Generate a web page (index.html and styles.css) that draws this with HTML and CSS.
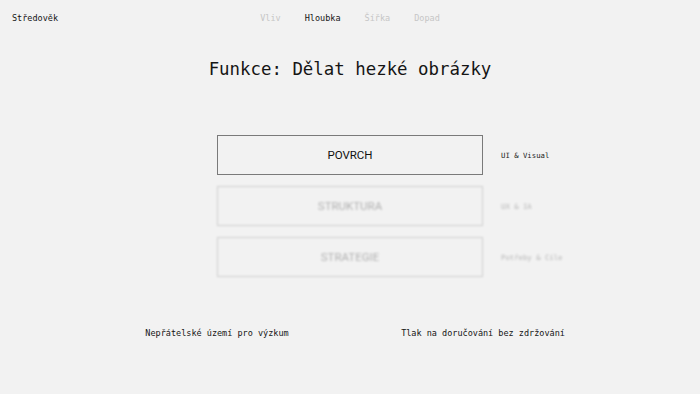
FILE: index.html
```html
<!DOCTYPE html>
<html lang="cs">
<head>
    <meta charset="UTF-8">
    <meta name="viewport" content="width=device-width, initial-scale=1.0">
    <title>Středověk</title>
    <link rel="stylesheet" href="styles.css">
</head>
<body>
    <header class="topbar">
        <div class="brand">Středověk</div>
        <nav class="nav">
            <a class="nav-link">Vliv</a>
            <a class="nav-link active">Hloubka</a>
            <a class="nav-link">Šířka</a>
            <a class="nav-link">Dopad</a>
        </nav>
    </header>

    <h1 class="title">Funkce: Dělat hezké obrázky</h1>

    <section class="layers">
        <div class="layer">
            <div class="layer-box">POVRCH</div>
            <div class="layer-note">UI &amp; Visual</div>
        </div>
        <div class="layer dim">
            <div class="layer-box">STRUKTURA</div>
            <div class="layer-note">UX &amp; IA</div>
        </div>
        <div class="layer dim">
            <div class="layer-box">STRATEGIE</div>
            <div class="layer-note">Potřeby &amp; Cíle</div>
        </div>
    </section>

    <footer class="axis">
        <div class="axis-end"><span>Nepřátelské území pro výzkum</span></div>
        <div class="axis-end"><span>Tlak na doručování bez zdržování</span></div>
    </footer>
</body>
</html>
```

FILE: styles.css
```css
body {
    margin: 0;
    height: 394px;
    background-color: #f2f2f2;
    color: #151515;
    font-family: "DejaVu Sans Mono", "Liberation Mono", monospace;
    font-size: 8.5px;
}
.topbar {
    display: grid;
    grid-template-columns: 1fr auto 1fr;
    align-items: center;
    height: 35px;
    padding: 0 12px;
}
.nav {
    display: flex;
    gap: 24px;
    margin-left: 0;
}
.nav-link {
    color: #c6c6c6;
}
.nav-link.active {
    color: #151515;
}
.title {
    margin: 20px 0 0;
    text-align: center;
    font-size: 17.4px;
    font-weight: normal;
    line-height: 28px;
}
.layers {
    display: flex;
    flex-direction: column;
    gap: 11px;
    margin-top: 52px;
}
.layer {
    display: grid;
    grid-template-columns: 1fr 266px 1fr;
    align-items: center;
}
.layer-box {
    grid-column: 2;
    height: 38px;
    border: 1px solid #7a7a7a;
    display: flex;
    align-items: center;
    justify-content: center;
    font-family: Roboto, "Liberation Sans", sans-serif;
    font-size: 11.5px;
    color: #111;
}
.layer-note {
    margin-left: 18px;
    font-size: 7.3px;
    color: #222;
}
.layer.dim {
    filter: blur(1.3px);
    opacity: 0.3;
}
.axis {
    display: flex;
    justify-content: space-between;
    width: 266px;
    margin: 51px auto 0;
}
.axis-end {
    width: 0;
    display: flex;
    justify-content: center;
    white-space: nowrap;
}
```
